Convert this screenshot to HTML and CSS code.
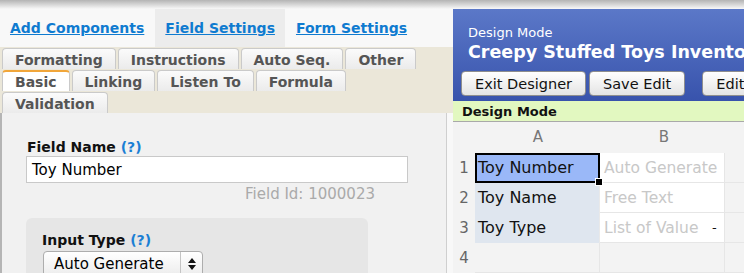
FILE: index.html
```html
<!DOCTYPE html>
<html lang="en">
<head>
    <meta charset="UTF-8">
    <title>designer</title>
    <link rel="stylesheet" href="styles.css">
</head>
<body>
<div class="shade"></div>
<div class="main">
    <div class="left">
        <div class="nav">
            <a class="nav_item" href="#">Add Components</a>
            <a class="nav_item on" href="#">Field Settings</a>
            <a class="nav_item" href="#">Form Settings</a>
        </div>
        <div class="tabs">
            <div class="tab_row">
                <div class="tab">Formatting</div>
                <div class="tab">Instructions</div>
                <div class="tab">Auto Seq.</div>
                <div class="tab">Other</div>
            </div>
            <div class="tab_row">
                <div class="tab active">Basic</div>
                <div class="tab">Linking</div>
                <div class="tab">Listen To</div>
                <div class="tab">Formula</div>
            </div>
            <div class="tab_row">
                <div class="tab">Validation</div>
            </div>
        </div>
        <div class="content">
            <div class="label">Field Name <span class="help">(?)</span></div>
            <div class="text_box">Toy Number</div>
            <div class="field_id">Field Id: 1000023</div>
            <div class="group">
                <div class="label">Input Type <span class="help">(?)</span></div>
                <div class="select">
                    <span class="select_text">Auto Generate</span>
                    <span class="select_arrows">
                        <svg width="8" height="12" viewBox="0 0 8 12"><path d="M4 0L8 5H0Z M4 12L0 7H8Z" fill="#111"/></svg>
                    </span>
                </div>
            </div>
        </div>
    </div>
    <div class="right">
        <div class="header">
            <div class="mode">Design Mode</div>
            <div class="title">Creepy Stuffed Toys Inventory</div>
            <div class="buttons">
                <div class="btn">Exit Designer</div>
                <div class="btn">Save Edit</div>
                <div class="btn far">Edit Form</div>
            </div>
        </div>
        <div class="green_bar">Design Mode</div>
        <div class="sheet">
            <div class="row head">
                <div class="num"></div>
                <div class="cell col">A</div>
                <div class="cell col">B</div>
                <div class="cell rest"></div>
            </div>
            <div class="row">
                <div class="num">1</div>
                <div class="cell a selected">Toy Number<span class="handle"></span></div>
                <div class="cell b">Auto Generate</div>
                <div class="cell rest"></div>
            </div>
            <div class="row">
                <div class="num">2</div>
                <div class="cell a">Toy Name</div>
                <div class="cell b">Free Text</div>
                <div class="cell rest"></div>
            </div>
            <div class="row">
                <div class="num">3</div>
                <div class="cell a">Toy Type</div>
                <div class="cell b">List of Value<span class="dash">-</span></div>
                <div class="cell rest"></div>
            </div>
            <div class="row">
                <div class="num">4</div>
                <div class="cell empty"></div>
                <div class="cell empty"></div>
                <div class="cell rest"></div>
            </div>
        </div>
    </div>
</div>
</body>
</html>
```

FILE: styles.css
```css
body {
    margin: 0;
    background: #f8f8f8;
    font-family: "DejaVu Sans", sans-serif;
    overflow: hidden;
}

.shade {
    height: 9px;
    background: linear-gradient(#b4b4b4, #f8f8f8);
}

.main {
    display: flex;
    height: 264px;
}

.left {
    width: 453px;
    display: flex;
    flex-direction: column;
}

.nav {
    display: flex;
    height: 38px;
}

.nav_item {
    padding: 0 10px;
    line-height: 38px;
    font-size: 14px;
    font-weight: bold;
    color: #0f7bd0;
    margin-right: 1px;
}

.nav_item.on {
    background: #ececec;
}

.tabs {
    background: #ebe7d9;
    padding-left: 2px;
}

.tab_row {
    display: flex;
    height: 22px;
    align-items: flex-end;
}

.tab {
    height: 21px;
    line-height: 22px;
    padding: 0 12px;
    margin-right: 2px;
    border: 1px solid #cacaca;
    border-bottom: none;
    border-radius: 4px 4px 0 0;
    background: linear-gradient(#fbfbfb, #ebebeb);
    font-size: 14px;
    font-weight: bold;
    color: #555;
    box-sizing: border-box;
}

.tab.active {
    background: #fff;
    border-top: 2px solid #f1a63a;
    line-height: 20px;
}

.content {
    flex: 1;
    background: #f1f1f1;
    border-left: 2px solid #b5b5b5;
    border-right: 1px solid #cfcfcf;
    margin-right: 6px;
    padding: 26px 0 0 24px;
}

.label {
    font-size: 14px;
    font-weight: bold;
    color: #111;
    margin-left: 1px;
}

.help {
    color: #1b7fd4;
}

.text_box {
    height: 25px;
    margin-top: 1px;
    border: 1px solid #c9c9c9;
    background: #fff;
    font-size: 15px;
    line-height: 26px;
    padding-left: 5px;
    width: 375px;
}

.field_id {
    width: 349px;
    text-align: right;
    font-size: 15px;
    color: #aaa;
    margin-top: 2px;
}

.group {
    width: 327px;
    height: 80px;
    margin-top: 15px;
    background: #e6e6e6;
    border-radius: 6px;
    padding: 14px 0 0 15px;
}

.select {
    display: flex;
    width: 158px;
    height: 24px;
    margin: 3px 0 0 2px;
    border: 1px solid #adadad;
    border-radius: 4px;
    background: linear-gradient(#ffffff, #ececec);
    font-size: 15px;
}

.select_text {
    flex: 1;
    padding-left: 10px;
    line-height: 24px;
    border-right: 1px solid #c4c4c4;
}

.select_arrows {
    width: 21px;
    display: flex;
    align-items: center;
    justify-content: center;
}

.right {
    flex: 1;
    background: #f3f3f3;
    min-width: 0;
}

.header {
    height: 92px;
    background: linear-gradient(#5b78c8, #3853ac);
    padding: 17px 0 0 15px;
    box-sizing: border-box;
    color: #fff;
    white-space: nowrap;
    overflow: hidden;
}

.mode {
    font-size: 13px;
    line-height: 14px;
}

.title {
    font-size: 17.5px;
    font-weight: bold;
    line-height: 24px;
}

.buttons {
    display: flex;
    margin: 7px 0 0 -7px;
}

.btn {
    height: 25px;
    line-height: 25px;
    padding: 0 13px;
    margin-right: 3px;
    border: 1px solid #8e8e8e;
    border-radius: 4px;
    background: linear-gradient(#ffffff, #e4e4e4);
    color: #111;
    font-size: 14.5px;
    box-sizing: border-box;
}

.btn.far {
    margin-left: 14px;
}

.green_bar {
    height: 20px;
    line-height: 21px;
    background: #e2f8c0;
    border-bottom: 1px solid #a9a9a9;
    padding-left: 9px;
    font-size: 13px;
    font-weight: bold;
    color: #111;
}

.sheet {
    display: flex;
    flex-direction: column;
}

.row {
    display: flex;
    height: 30px;
}

.row.head {
    height: 31px;
}

.num {
    width: 22px;
    text-align: center;
    line-height: 30px;
    font-size: 15px;
    color: #666;
}

.cell {
    width: 125px;
    height: 30px;
    line-height: 30px;
    padding-left: 3px;
    font-size: 16px;
    color: #111;
    box-sizing: border-box;
    border-right: 1px solid #e6e6e6;
    border-bottom: 1px solid #e6e6e6;
    position: relative;
    white-space: nowrap;
}

.col {
    text-align: center;
    color: #777;
    font-size: 15px;
    border: none;
    width: 126px;
    padding-left: 0;
}

.cell.a {
    background: #dfe6ef;
    border-right: 1px solid #e9e9e9;
    border-bottom: none;
}

.cell.selected {
    background: #9ab8f8;
    border: 2px solid #000;
    line-height: 26px;
    padding-left: 1px;
}

.handle {
    position: absolute;
    right: -5px;
    bottom: -5px;
    width: 6px;
    height: 6px;
    background: #000;
    border: 1px solid #fff;
    z-index: 2;
}

.cell.b {
    background: #fff;
    color: #c8c8c8;
    padding-left: 4px;
    font-size: 15.5px;
}

.dash {
    position: absolute;
    left: 112px;
    color: #111;
    font-size: 13px;
}

.cell.rest {
    flex: 1;
    border-right: none;
    border-left: none;
}

.row.head .cell.rest {
    border: none;
}

.cell.empty {
    background: #f3f3f3;
}
```
